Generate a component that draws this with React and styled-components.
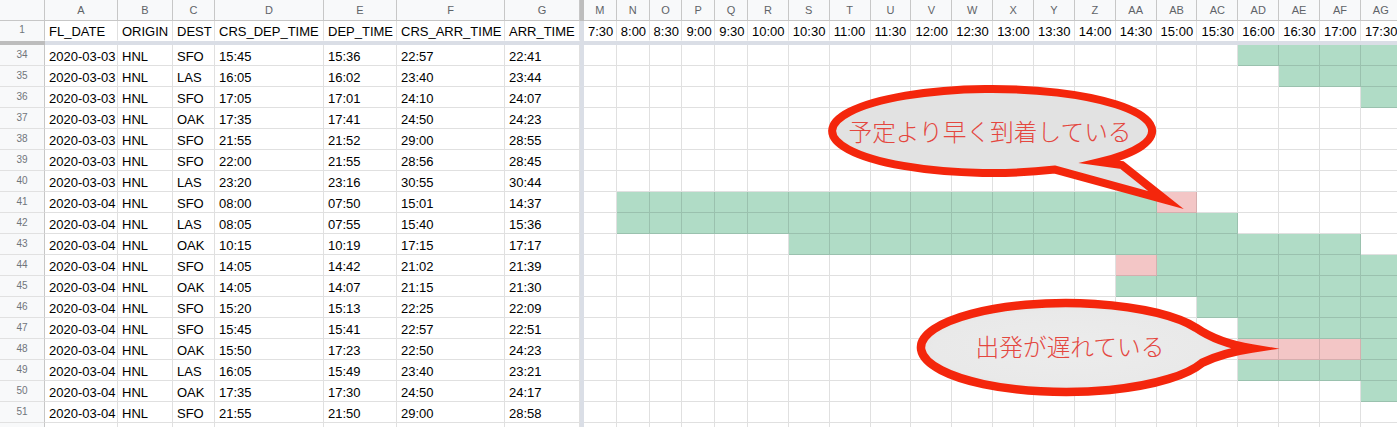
import React from "react";
import styled, { createGlobalStyle } from "styled-components";

const GlobalStyle = createGlobalStyle`
  *, *::before, *::after { box-sizing: border-box; }
  html, body { margin: 0; padding: 0; background: #fff; overflow: hidden; }
  body { font-family: "Liberation Sans", Arial, sans-serif; }
`;

const FROZEN = [
  { key: "A", width: 73, title: "FL_DATE" },
  { key: "B", width: 55, title: "ORIGIN" },
  { key: "C", width: 42, title: "DEST" },
  { key: "D", width: 109, title: "CRS_DEP_TIME" },
  { key: "E", width: 73, title: "DEP_TIME" },
  { key: "F", width: 108, title: "CRS_ARR_TIME" },
  { key: "G", width: 75, title: "ARR_TIME" },
];

const SLOT_KEYS = ["M", "N", "O", "P", "Q", "R", "S", "T", "U", "V", "W", "X", "Y", "Z", "AA", "AB", "AC", "AD", "AE", "AF", "AG", "AH"];

const SLOTS = SLOT_KEYS.map((key, i) => {
  const mins = 7 * 60 + 30 + i * 30;
  const label = `${Math.floor(mins / 60)}:${String(mins % 60).padStart(2, "0")}`;
  return { key, mins, label, width: i < 5 ? 32.8 : 40.87 };
});

const FLIGHTS = [
  [34, "2020-03-03", "HNL", "SFO", "15:45", "15:36", "22:57", "22:41"],
  [35, "2020-03-03", "HNL", "LAS", "16:05", "16:02", "23:40", "23:44"],
  [36, "2020-03-03", "HNL", "SFO", "17:05", "17:01", "24:10", "24:07"],
  [37, "2020-03-03", "HNL", "OAK", "17:35", "17:41", "24:50", "24:23"],
  [38, "2020-03-03", "HNL", "SFO", "21:55", "21:52", "29:00", "28:55"],
  [39, "2020-03-03", "HNL", "SFO", "22:00", "21:55", "28:56", "28:45"],
  [40, "2020-03-03", "HNL", "LAS", "23:20", "23:16", "30:55", "30:44"],
  [41, "2020-03-04", "HNL", "SFO", "08:00", "07:50", "15:01", "14:37"],
  [42, "2020-03-04", "HNL", "LAS", "08:05", "07:55", "15:40", "15:36"],
  [43, "2020-03-04", "HNL", "OAK", "10:15", "10:19", "17:15", "17:17"],
  [44, "2020-03-04", "HNL", "SFO", "14:05", "14:42", "21:02", "21:39"],
  [45, "2020-03-04", "HNL", "OAK", "14:05", "14:07", "21:15", "21:30"],
  [46, "2020-03-04", "HNL", "SFO", "15:20", "15:13", "22:25", "22:09"],
  [47, "2020-03-04", "HNL", "SFO", "15:45", "15:41", "22:57", "22:51"],
  [48, "2020-03-04", "HNL", "OAK", "15:50", "17:23", "22:50", "24:23"],
  [49, "2020-03-04", "HNL", "LAS", "16:05", "15:49", "23:40", "23:21"],
  [50, "2020-03-04", "HNL", "OAK", "17:35", "17:30", "24:50", "24:17"],
  [51, "2020-03-04", "HNL", "SFO", "21:55", "21:50", "29:00", "28:58"],
];

const toMin = (s) => {
  const [h, m] = s.split(":").map(Number);
  return h * 60 + m;
};

// actual flight -> green, scheduled but not flying -> pink
const slotFill = (row, t) => {
  const [crsDep, dep, crsArr, arr] = row.slice(4).map(toMin);
  if (t >= dep && t <= arr) return "green";
  if (t >= crsDep && t <= crsArr) return "pink";
  return null;
};

const FILLS = { green: "#b0dcc6", pink: "#f3c6c6" };

const Sheet = styled.div`
  position: relative;
  width: 1397px;
  height: 427px;
  overflow: hidden;
  background: #fff;
`;

const Row = styled.div`
  display: flex;
  height: ${(p) => p.$h}px;
  white-space: nowrap;
`;

const HeadCell = styled.div`
  flex: 0 0 ${(p) => p.$w}px;
  display: flex;
  align-items: center;
  justify-content: center;
  background: #f8f9fa;
  color: #5f6368;
  font-size: 11px;
  border-right: 1px solid #c7c7c7;
  border-bottom: 1px solid #c7c7c7;
`;

const RowNum = styled.div`
  flex: 0 0 45px;
  display: flex;
  align-items: flex-end;
  justify-content: center;
  padding-bottom: 4px;
  background: #f8f9fa;
  color: #70757a;
  font-size: 10px;
  line-height: 12px;
  border-right: 1px solid #c7c7c7;
  border-bottom: 1px solid ${(p) => (p.$last ? "transparent" : "#e1e1e1")};
`;

const Cell = styled.div`
  flex: 0 0 ${(p) => p.$w}px;
  display: flex;
  align-items: flex-end;
  padding: 0 4px 1px;
  font-size: 13px;
  line-height: 15px;
  color: #000;
  overflow: hidden;
  background: ${(p) => (p.$fill ? FILLS[p.$fill] : "#fff")};
  border-right: 1px solid rgba(0, 0, 0, 0.12);
  border-bottom: 1px solid ${(p) => (p.$last ? "transparent" : "rgba(0, 0, 0, 0.12)")};
`;

const FreezeV = styled.div`
  flex: 0 0 4px;
  background: ${(p) => (p.$dark ? "#bdbdbd" : "#dadee6")};
`;

const FreezeH = styled.div`
  display: flex;
  height: 4px;
`;

const FreezeHHead = styled.div`
  flex: 0 0 45px;
  background: #bdbdbd;
`;

const FreezeHFill = styled.div`
  flex: 1;
  background: #dadee6;
`;

const Overlay = styled.svg`
  position: absolute;
  inset: 0;
  pointer-events: none;
`;

const Label = styled.span`
  position: absolute;
  left: ${(p) => p.$x}px;
  top: ${(p) => p.$y}px;
  transform: translate(-50%, -50%);
  font-family: "Noto Sans CJK JP", "Noto Sans", sans-serif;
  font-weight: 300;
  font-size: 23.7px;
  line-height: 1;
  color: #e4473f;
  white-space: nowrap;
  pointer-events: none;
`;

const RED = "#f4260c";

const Bubbles = () => (
  <Overlay width="1397" height="427" viewBox="0 0 1397 427">
    <defs>
      <radialGradient id="softFill" cx="0.45" cy="0.5" r="0.55">
        <stop offset="0%" stopColor="#ececec" />
        <stop offset="75%" stopColor="#e9e9e9" />
        <stop offset="100%" stopColor="#e1e1e1" />
      </radialGradient>
    </defs>
    <path
      d="M1055 169.6 A160 42 0 1 1 1100 162 L1122 165 L1166 200 Z"
      fill="#e2e2e2"
      stroke={RED}
      strokeWidth="8"
      strokeLinejoin="miter"
      strokeMiterlimit="12"
    />
    <path
      d="M1202 362.9 A145 44.5 0 1 1 1196 327.8 Q1218 343 1252 348.5 Q1222 353 1202 362.9 Z"
      fill="url(#softFill)"
      stroke={RED}
      strokeWidth="8.5"
      strokeLinejoin="miter"
      strokeMiterlimit="12"
    />
  </Overlay>
);

export default function App() {
  return (
    <>
      <GlobalStyle />
      <Sheet>
        <Row $h={21}>
          <HeadCell $w={45} />
          {FROZEN.map((c) => (
            <HeadCell key={c.key} $w={c.width}>
              {c.key}
            </HeadCell>
          ))}
          <FreezeV $dark />
          {SLOTS.map((s) => (
            <HeadCell key={s.key} $w={s.width}>
              {s.key}
            </HeadCell>
          ))}
        </Row>
        <Row $h={20}>
          <RowNum $last>1</RowNum>
          {FROZEN.map((c) => (
            <Cell key={c.key} $w={c.width} $last>
              {c.title}
            </Cell>
          ))}
          <FreezeV />
          {SLOTS.map((s) => (
            <Cell key={s.key} $w={s.width} $last>
              {s.label}
            </Cell>
          ))}
        </Row>
        <FreezeH>
          <FreezeHHead />
          <FreezeHFill />
        </FreezeH>
        {FLIGHTS.map((row) => (
          <Row key={row[0]} $h={21}>
            <RowNum>{row[0]}</RowNum>
            {FROZEN.map((c, i) => (
              <Cell key={c.key} $w={c.width}>
                {row[i + 1]}
              </Cell>
            ))}
            <FreezeV />
            {SLOTS.map((s) => (
              <Cell key={s.key} $w={s.width} $fill={slotFill(row, s.mins)} />
            ))}
          </Row>
        ))}
        <Row $h={21}>
          <RowNum />
          {FROZEN.map((c) => (
            <Cell key={c.key} $w={c.width} />
          ))}
          <FreezeV />
          {SLOTS.map((s) => (
            <Cell key={s.key} $w={s.width} />
          ))}
        </Row>
        <Bubbles />
        <Label $x={990} $y={132}>予定より早く到着している</Label>
        <Label $x={1070} $y={347}>出発が遅れている</Label>
      </Sheet>
    </>
  );
}
